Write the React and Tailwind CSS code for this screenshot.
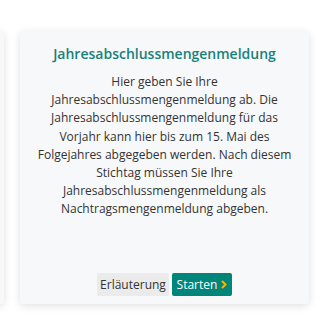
import React from 'react';

function Card({ children, className = '' }) {
  return (
    <div
      className={`shrink-0 w-[289px] h-[273px] bg-[#f7f8fa] rounded-[3px] shadow-[0_2px_8px_rgba(0,0,0,0.12)] ${className}`}
    >
      {children}
    </div>
  );
}

export default function App() {
  return (
    <div
      className="w-[321px] h-[321px] bg-white overflow-hidden pt-[31px]"
      style={{ fontFamily: '"Open Sans", sans-serif' }}
    >
      <div className="flex gap-4">
        <Card className="-ml-[285px]" />
        <Card className="flex flex-col items-center px-[12px] pt-[12px] pb-[8px]">
          <h2 className="text-[14px] leading-[22px] font-semibold text-[#17817b] text-center">
            Jahresabschlussmengenmeldung
          </h2>
          <p className="mt-[8px] text-[12px] leading-[18.2px] text-[#333333] text-center">
            Hier geben Sie Ihre Jahresabschlussmengenmeldung ab. Die
            Jahresabschlussmengenmeldung für das Vorjahr kann hier bis zum 15. Mai des
            Folgejahres abgegeben werden. Nach diesem Stichtag müssen Sie Ihre
            Jahresabschlussmengenmeldung als Nachtragsmengenmeldung abgeben.
          </p>
          <div className="mt-auto flex gap-[3px]">
            <button className="h-[23px] w-[72px] rounded-[2px] bg-[#ebebeb] text-[12px] text-[#333333]">
              Erläuterung
            </button>
            <button className="h-[23px] w-[60px] rounded-[2px] bg-[#00857a] text-[12px] font-medium text-white flex items-center justify-center gap-[4px]">
              Starten
              <svg width="6" height="9" viewBox="0 0 6 9" fill="none">
                <path d="M1 1l3.5 3.5L1 8" stroke="#f5b800" strokeWidth="2" />
              </svg>
            </button>
          </div>
        </Card>
      </div>
    </div>
  );
}
